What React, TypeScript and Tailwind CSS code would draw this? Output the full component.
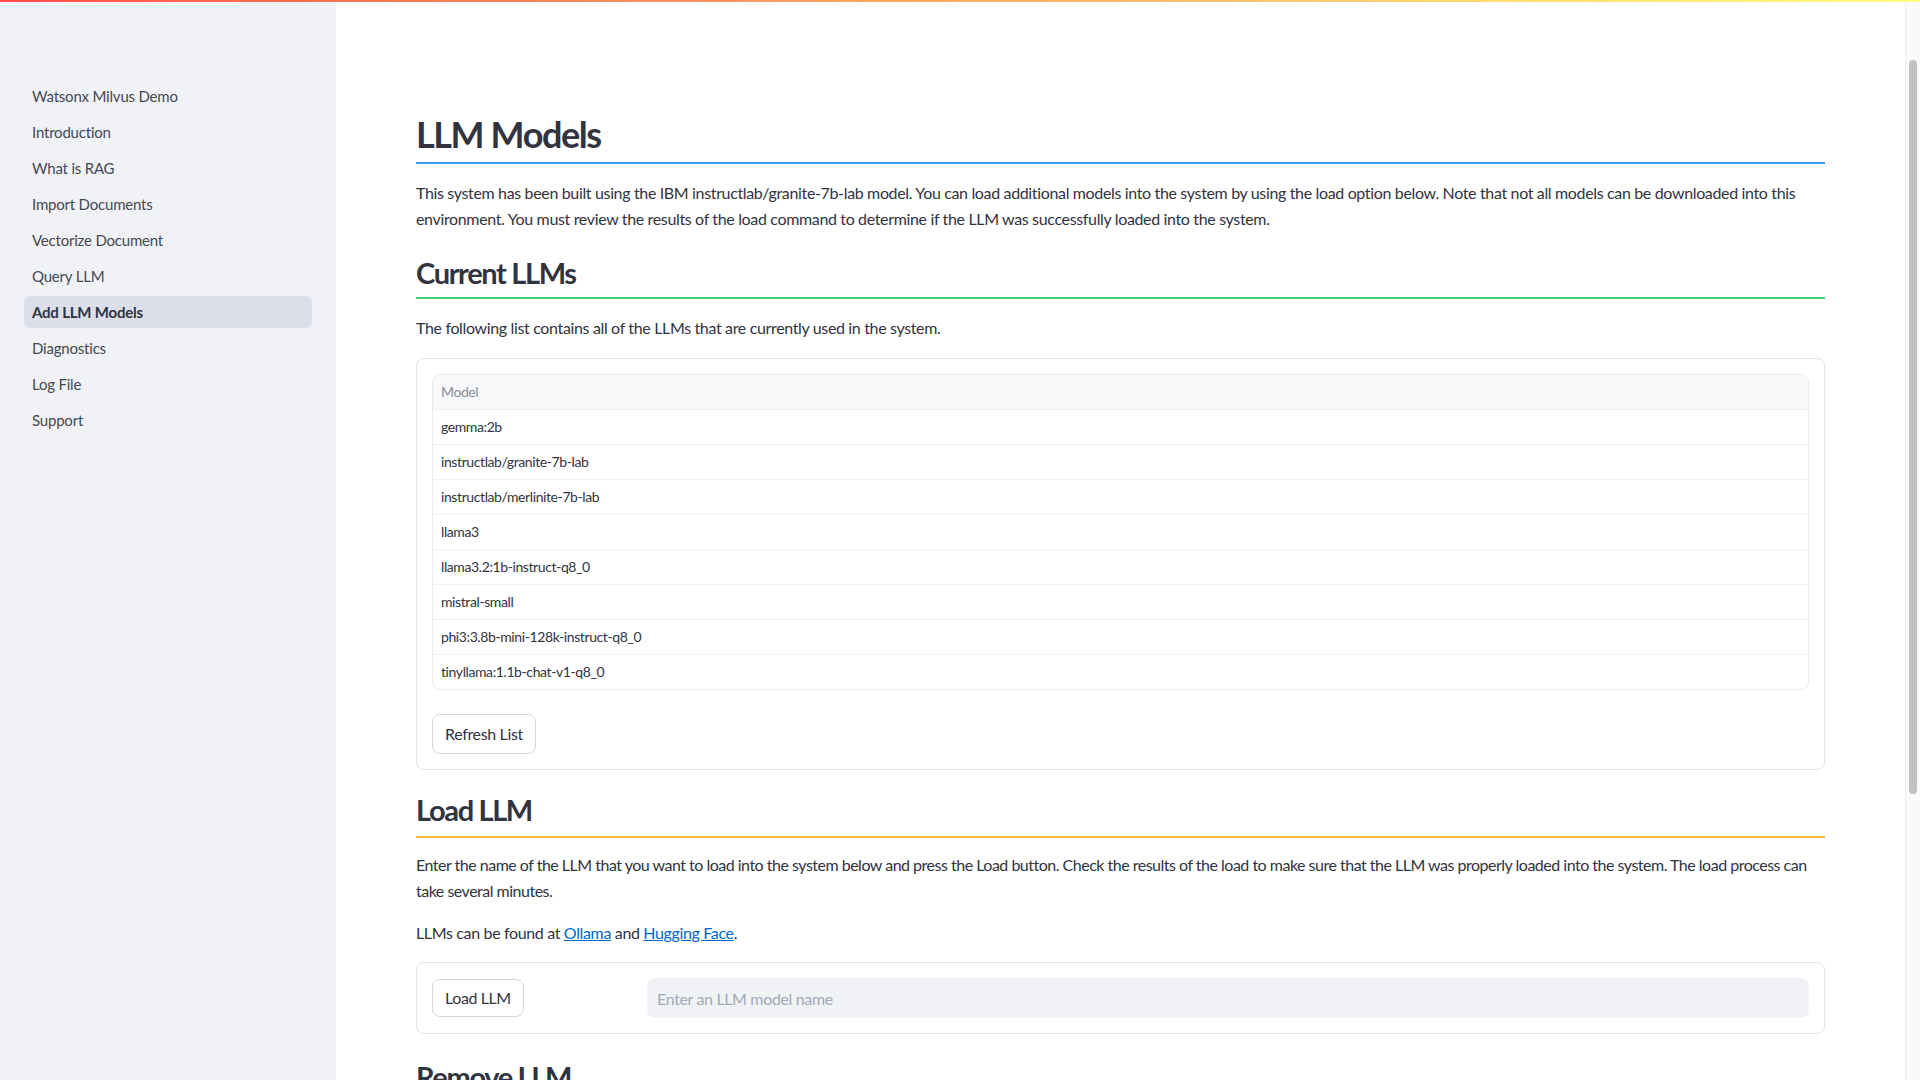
import React from "react";

const navItems = [
  "Watsonx Milvus Demo",
  "Introduction",
  "What is RAG",
  "Import Documents",
  "Vectorize Document",
  "Query LLM",
  "Add LLM Models",
  "Diagnostics",
  "Log File",
  "Support",
];

const models = [
  "gemma:2b",
  "instructlab/granite-7b-lab",
  "instructlab/merlinite-7b-lab",
  "llama3",
  "llama3.2:1b-instruct-q8_0",
  "mistral-small",
  "phi3:3.8b-mini-128k-instruct-q8_0",
  "tinyllama:1.1b-chat-v1-q8_0",
];

function App() {
  return (
    <div className="flex h-screen w-full flex-col overflow-hidden bg-white font-['Lato','Noto_Sans',sans-serif] text-[#31333f]">
      {/* decoration bar */}
      <div className="h-[2px] w-full shrink-0 bg-gradient-to-r from-[#ff4b4b] to-[#fffd80]" />

      <div className="flex min-h-0 flex-1">
        {/* Sidebar */}
        <aside className="w-[336px] shrink-0 bg-[#f0f2f6] px-6 pt-[78px]">
          <nav className="flex flex-col gap-1">
            {navItems.map((item) => {
              const active = item === "Add LLM Models";
              return (
                <div
                  key={item}
                  className={
                    active
                      ? "flex h-8 items-center rounded-md bg-[#dadfe9] px-2 text-[15px] font-bold tracking-[-0.2px] text-[#31333f]"
                      : "flex h-8 items-center rounded-md px-2 text-[15px] tracking-[-0.2px] text-[#464854]"
                  }
                >
                  {item}
                </div>
              );
            })}
          </nav>
        </aside>

        {/* Main */}
        <main className="min-w-0 flex-1 overflow-hidden px-20 pt-[106px] text-base tracking-[-0.35px]">
          <h1 className="text-[36px] font-bold leading-[52px] tracking-[-1.4px]">LLM Models</h1>
          <div className="mt-[2px] h-[2px] bg-[#3d9df3]" />
          <p className="mt-[16px] leading-[26px]">
            This system has been built using the IBM instructlab/granite-7b-lab model. You can load additional
            models into the system by using the load option below. Note that not all models can be downloaded
            into this environment. You must review the results of the load command to determine if the LLM was
            successfully loaded into the system.
          </p>

          <h2 className="mt-[19px] text-[29px] font-bold leading-[43px] tracking-[-1.35px]">Current LLMs</h2>
          <div className="mt-[3px] h-[2px] bg-[#3dd56d]" />
          <p className="mt-[16px] leading-[26px]">
            The following list contains all of the LLMs that are currently used in the system.
          </p>

          <div className="mt-[17px] rounded-lg border border-[#dfe1e6] p-[15px]">
            <div className="overflow-hidden rounded-lg border border-[#e9ebef] text-sm tracking-[-0.4px]">
              <div className="flex h-[34px] items-center bg-[#f8f9fb] px-2 text-[#8a8d99]">Model</div>
              {models.map((m) => (
                <div
                  key={m}
                  className="flex h-[35px] items-center border-t border-[#eef0f3] px-2 text-[#31333f]"
                >
                  {m}
                </div>
              ))}
            </div>
            <button className="mt-6 h-[40px] rounded-lg border border-[#d5d7dc] bg-white px-3 text-base tracking-[-0.35px] text-[#31333f]">
              Refresh List
            </button>
          </div>

          <h2 className="mt-[18px] text-[29px] font-bold leading-[43px] tracking-[-1.35px]">Load LLM</h2>
          <div className="mt-[5px] h-[2px] bg-[#ffbd45]" />
          <p className="mt-[14px] leading-[26px] tracking-[-0.5px]">
            Enter the name of the LLM that you want to load into the system below and press the Load button. Check
            the results of the load to make sure that the LLM was properly loaded into the system. The load process
            can take several minutes.
          </p>
          <p className="mt-[16px] leading-[26px]">
            LLMs can be found at{" "}
            <a className="text-[#0068c9] underline" href="#">
              Ollama
            </a>{" "}
            and{" "}
            <a className="text-[#0068c9] underline" href="#">
              Hugging Face
            </a>
            .
          </p>

          <div className="mt-[16px] flex items-center gap-4 rounded-lg border border-[#dfe1e6] p-[15px]">
            <div className="w-[199px] shrink-0">
              <button className="h-[38px] rounded-lg border border-[#d5d7dc] bg-white px-3 text-base tracking-[-0.4px] text-[#31333f]">
                Load LLM
              </button>
            </div>
            <input
              className="h-10 min-w-0 flex-1 rounded-lg bg-[#f0f2f6] px-2.5 text-base tracking-[-0.35px] text-[#31333f] outline-none placeholder:text-[#a3a8b8]"
              placeholder="Enter an LLM model name"
            />
          </div>

          <h2 className="mt-[21px] text-[29px] font-bold leading-[43px] tracking-[-1.35px]">Remove LLM</h2>
        </main>

        {/* Scrollbar */}
        <div className="flex w-[15px] shrink-0 flex-col border-l border-[#ececec] bg-[#fafafa] pt-[58px]">
          <div className="mx-auto h-[734px] w-2 rounded-sm bg-[#c1c1c1]" />
        </div>
      </div>
    </div>
  );
}

export default App;
